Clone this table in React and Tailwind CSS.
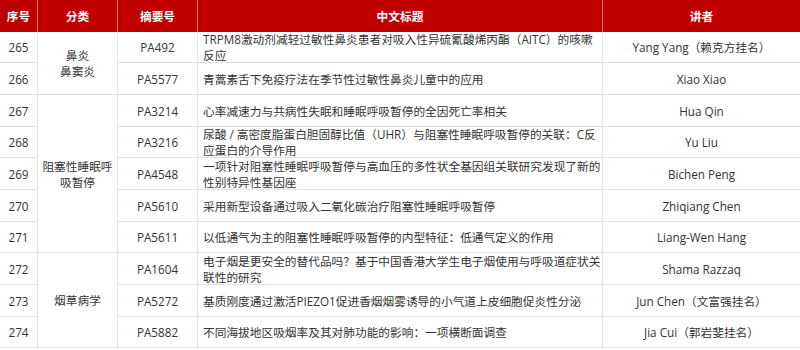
import React from "react";

const rows = [
  { no: 265, code: "PA492", title: ["TRPM8激动剂减轻过敏性鼻炎患者对吸入性异硫氰酸烯丙酯（AITC）的咳嗽", "反应"], speaker: "Yang Yang（赖克方挂名）" },
  { no: 266, code: "PA5577", title: ["青蒿素舌下免疫疗法在季节性过敏性鼻炎儿童中的应用"], speaker: "Xiao Xiao" },
  { no: 267, code: "PA3214", title: ["心率减速力与共病性失眠和睡眠呼吸暂停的全因死亡率相关"], speaker: "Hua Qin" },
  { no: 268, code: "PA3216", title: ["尿酸 / 高密度脂蛋白胆固醇比值（UHR）与阻塞性睡眠呼吸暂停的关联：C反", "应蛋白的介导作用"], speaker: "Yu Liu" },
  { no: 269, code: "PA4548", title: ["一项针对阻塞性睡眠呼吸暂停与高血压的多性状全基因组关联研究发现了新的", "性别特异性基因座"], speaker: "Bichen Peng" },
  { no: 270, code: "PA5610", title: ["采用新型设备通过吸入二氧化碳治疗阻塞性睡眠呼吸暂停"], speaker: "Zhiqiang Chen" },
  { no: 271, code: "PA5611", title: ["以低通气为主的阻塞性睡眠呼吸暂停的内型特征：低通气定义的作用"], speaker: "Liang-Wen Hang" },
  { no: 272, code: "PA1604", title: ["电子烟是更安全的替代品吗？基于中国香港大学生电子烟使用与呼吸道症状关", "联性的研究"], speaker: "Shama Razzaq" },
  { no: 273, code: "PA5272", title: ["基质刚度通过激活PIEZO1促进香烟烟雾诱导的小气道上皮细胞促炎性分泌"], speaker: "Jun Chen（文富强挂名）" },
  { no: 274, code: "PA5882", title: ["不同海拔地区吸烟率及其对肺功能的影响：一项横断面调查"], speaker: "Jia Cui（郭岩斐挂名）" },
];

// category cells span rows; start = grid row line (header is row 1)
const groups = [
  { label: "鼻炎\n鼻窦炎", span: "row-start-2 row-end-4" },
  { label: "阻塞性睡眠呼吸暂停", span: "row-start-4 row-end-9" },
  { label: "烟草病学", span: "row-start-9 row-end-12" },
];

const rowStarts = [
  "row-start-2", "row-start-3", "row-start-4", "row-start-5", "row-start-6",
  "row-start-7", "row-start-8", "row-start-9", "row-start-10", "row-start-11",
];

const cell = "flex items-center border-r border-b border-[#e3e3e3] text-[#333333]";
const head = "flex items-center justify-center border-r border-[#e86a6a] bg-[#c00000] text-white font-bold";

export default function App() {
  return (
    <div
      className="w-[800px] h-[350px] bg-white text-[11.7px] leading-[16px]"
      style={{ fontFamily: '"Open Sans", "Noto Sans CJK SC", sans-serif' }}
    >
      <div className="grid grid-cols-[38px_80px_80px_405px_197px] grid-rows-[32px_31px_32px_32px_31px_32px_32px_31px_32px_32px_31px]">
        <div className={`${head} col-start-1 row-start-1`}>序号</div>
        <div className={`${head} col-start-2 row-start-1`}>分类</div>
        <div className={`${head} col-start-3 row-start-1`}>摘要号</div>
        <div className={`${head} col-start-4 row-start-1`}>中文标题</div>
        <div className={`${head} col-start-5 row-start-1 border-r-0`}>讲者</div>

        {groups.map((g) => (
          <div
            key={g.label}
            className={`${cell} col-start-2 ${g.span} justify-center text-center px-1 whitespace-pre-line`}
          >
            {g.label}
          </div>
        ))}

        {rows.map((r, i) => (
          <React.Fragment key={r.no}>
            <div className={`${cell} col-start-1 ${rowStarts[i]} justify-center`}>{r.no}</div>
            <div className={`${cell} col-start-3 ${rowStarts[i]} justify-center`}>{r.code}</div>
            <div className={`${cell} col-start-4 ${rowStarts[i]} pl-[5px]`}>
              <div className="whitespace-nowrap">
                {r.title.map((t, j) => (
                  <div key={j}>{t}</div>
                ))}
              </div>
            </div>
            <div className={`${cell} col-start-5 ${rowStarts[i]} justify-center border-r-0`}>{r.speaker}</div>
          </React.Fragment>
        ))}
      </div>
    </div>
  );
}
